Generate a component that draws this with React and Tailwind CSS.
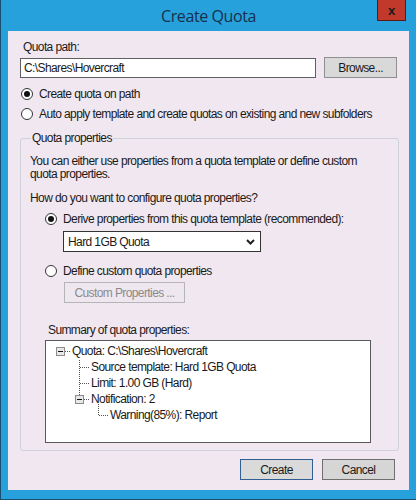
import React from "react";

const ui = { fontFamily: '"Liberation Sans", Arial, sans-serif' };

function Radio({ checked, label, className = "" }) {
  return (
    <div className={`flex h-[14px] items-center ${className}`}>
      <span className="flex h-[12px] w-[12px] shrink-0 items-center justify-center rounded-full border border-[#333333] bg-white">
        {checked ? <span className="h-[6px] w-[6px] rounded-full bg-[#111111]" /> : null}
      </span>
      <span className="ml-[6px] whitespace-nowrap text-[12px] leading-[14px] text-[#1a1a1a]">{label}</span>
    </div>
  );
}

function Expander() {
  return (
    <span className="flex h-[9px] w-[9px] shrink-0 items-center justify-center border border-[#8c8c8c] bg-[#e8e8e8]">
      <span className="h-[1px] w-[5px] bg-[#111111]" />
    </span>
  );
}

const rows = [
  { depth: 0, text: "Quota: C:\\Shares\\Hovercraft", expander: true },
  { depth: 1, text: "Source template: Hard 1GB Quota" },
  { depth: 1, text: "Limit: 1.00 GB (Hard)" },
  { depth: 1, text: "Notification: 2", expander: true },
  { depth: 2, text: "Warning(85%): Report" },
];

function Tree() {
  return (
    <div className="relative mt-[3px] h-[103px] w-[326px] border border-[#5a5a5a] bg-white pt-[2px]">
      <svg className="absolute left-0 top-0" width="326" height="103">
        <g stroke="#555" strokeWidth="1" strokeDasharray="1 1" fill="none">
          <line x1="19" y1="10.5" x2="25" y2="10.5" />
          <line x1="33.5" y1="19" x2="33.5" y2="54" />
          <line x1="34" y1="26.5" x2="43" y2="26.5" />
          <line x1="34" y1="42.5" x2="43" y2="42.5" />
          <line x1="38" y1="58.5" x2="44" y2="58.5" />
          <line x1="52.5" y1="63" x2="52.5" y2="74" />
          <line x1="53" y1="74.5" x2="62" y2="74.5" />
        </g>
      </svg>
      {rows.map((r) => (
        <div
          key={r.text}
          className={`relative flex h-[16px] items-center whitespace-nowrap text-[12px] text-[#1a1a1a] ${
            r.depth === 0 ? "pl-[10px]" : r.depth === 1 ? "pl-[29px]" : "pl-[64px]"
          }`}
        >
          {r.expander ? (
            <>
              <Expander />
              <span className="ml-[7px]">{r.text}</span>
            </>
          ) : (
            <span className={r.depth === 1 ? "ml-[16px]" : ""}>{r.text}</span>
          )}
        </div>
      ))}
    </div>
  );
}

export default function App() {
  return (
    <div
      className="flex h-[500px] w-[416px] flex-col border-b border-l border-[#1b4f72] bg-[#27a1db] tracking-[-0.6px]"
      style={ui}
    >
      <div className="relative flex h-[31px] items-center justify-center">
        <span
          className="pt-[1px] text-[16px] tracking-[-0.4px] text-[#17304f]"
          style={{ fontFamily: '"Open Sans", "Noto Sans", sans-serif' }}
        >
          Create Quota
        </span>
        <div className="absolute right-[10px] top-0 flex h-[21px] w-[29px] items-center justify-center border border-t-0 border-[#5a1b16] bg-[#c0392b] text-[13px] font-bold leading-none tracking-normal text-[#1a1a1a]">
          x
        </div>
      </div>
      <div className="mx-[7px] flex h-[459px] flex-col bg-[#f1e7f0] px-[12px] text-[12px] text-[#1a1a1a]">
        <div className="mt-[9px] pl-[3px] leading-[14px]">Quota path:</div>
        <div className="mt-[3px] flex items-center">
          <div className="flex h-[20px] w-[297px] items-center border border-[#5f5f5f] bg-white pl-[3px]">
            C:\Shares\Hovercraft
          </div>
          <div className="ml-[8px] flex h-[21px] w-[73px] items-center justify-center border border-[#8f8f8f] bg-[#d9d9d9]">
            Browse...
          </div>
        </div>
        <Radio checked label="Create quota on path" className="ml-[1px] mt-[9px]" />
        <Radio
          label="Auto apply template and create quotas on existing and new subfolders"
          className="ml-[1px] mt-[6px]"
        />

        <fieldset className="mt-[10px] h-[320px] w-[379px] rounded-[3px] border border-[#cdd3d8] px-[9px] pb-0 pt-0">
          <legend className="ml-[1px] px-[1px] leading-[14px]">Quota properties</legend>
          <div className="mt-[10px] leading-[13px]">
            You can either use properties from a quota template or define custom
            <br />
            quota properties.
          </div>
          <div className="mt-[10px] leading-[14px]">How do you want to configure quota properties?</div>
          <Radio
            checked
            label="Derive properties from this quota template (recommended):"
            className="ml-[15px] mt-[7px]"
          />
          <div className="ml-[33px] mt-[5px] flex h-[21px] w-[198px] items-center justify-between border border-[#333333] bg-white pl-[4px] pr-[5px]">
            <span>Hard 1GB Quota</span>
            <svg width="9" height="6" viewBox="0 0 9 6">
              <path d="M1 1 L4.5 4.5 L8 1" stroke="#222" strokeWidth="2" fill="none" />
            </svg>
          </div>
          <Radio label="Define custom quota properties" className="ml-[15px] mt-[12px]" />
          <div className="ml-[34px] mt-[4px] flex h-[21px] w-[121px] items-center justify-center border border-[#b5b5b5] bg-[#efe7ef] text-[#8a8a8a]">
            Custom Properties ...
          </div>
          <div className="ml-[18px] mt-[20px] leading-[14px]">Summary of quota properties:</div>
          <div className="ml-[15px]">
            <Tree />
          </div>
        </fieldset>

        <div className="mt-[8px] flex justify-end gap-[9px] pr-[2px]">
          <div className="flex h-[21px] w-[73px] items-center justify-center border border-[#2f5f93] bg-[#dadada]">
            Create
          </div>
          <div className="flex h-[21px] w-[73px] items-center justify-center border border-[#6f6f6f] bg-[#d6d6d6]">
            Cancel
          </div>
        </div>
      </div>
    </div>
  );
}
